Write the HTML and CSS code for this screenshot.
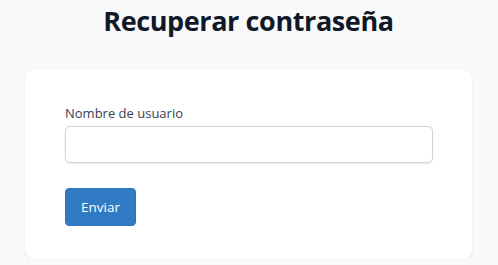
FILE: index.html
```html
<!DOCTYPE html>
<html lang="es">
<head>
<meta charset="utf-8">
<title>Recuperar contraseña</title>
<link rel="stylesheet" href="styles.css">
</head>
<body>
<main class="page">
  <h1 class="title">Recuperar contraseña</h1>
  <form class="card">
    <label class="label" for="user">Nombre de usuario</label>
    <input class="input" id="user" type="text">
    <button class="button" type="button">Enviar</button>
  </form>
</main>
</body>
</html>
```
FILE: styles.css
```css
html, body {
  margin: 0;
  padding: 0;
  background: #f8f9fb;
}
body {
  font-family: "Open Sans", "Noto Sans", sans-serif;
  color: #212529;
}
.page {
  padding: 0 26px 0 25px;
}
.title {
  margin: 0;
  padding-top: 3px;
  height: 70px;
  box-sizing: border-box;
  text-align: center;
  font-size: 27px;
  line-height: 36px;
  font-weight: 700;
  color: #111827;
  letter-spacing: -0.4px;
}
.card {
  background: #fff;
  border-radius: 8px;
  box-shadow: 0 1px 3px rgba(0,0,0,0.08);
  padding: 33px 39px 32px 40px;
  display: flex;
  flex-direction: column;
  align-items: flex-start;
  height: 188px;
  box-sizing: border-box;
}
.label {
  font-size: 13px;
  line-height: 20px;
  color: #374151;
  margin-bottom: 3px;
}
.input {
  width: 100%;
  height: 37px;
  box-sizing: border-box;
  border: 1px solid #d4d1dc;
  border-radius: 5px;
  background: #fff;
  box-shadow: 0 1px 2px rgba(0,0,0,0.08);
  margin: 0 0 25px 0;
  font: inherit;
}
.button {
  width: 71px;
  height: 38px;
  border: 1px solid #2c76bc;
  border-radius: 4px;
  background: #307bc4;
  color: #fff;
  font-family: inherit;
  font-size: 13.5px;
  padding: 0;
}
```
